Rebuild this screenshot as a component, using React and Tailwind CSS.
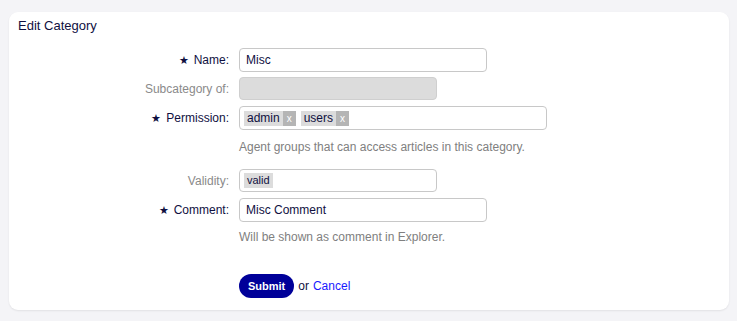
export default function App() {
  const font = { fontFamily: '"Liberation Sans", Arial, sans-serif' };
  return (
    <div className="min-h-[321px] w-[737px] bg-[#f4f4f7] pt-[12px]" style={font}>
      <div className="ml-[9px] h-[298px] w-[720px] rounded-[9px] bg-white shadow-[0_1px_2px_rgba(0,0,0,0.08)]">
        <h2 className="px-[9px] pt-[6px] text-[13px] leading-[16px] text-[#10103f]">Edit Category</h2>

        <div className="mt-[14px] flex flex-col text-[12px]">
          <Row label="Name:" required>
            <div className="flex h-[24px] w-[248px] items-center rounded-[4px] border border-[#c8c8c8] bg-white px-[6px] text-[12px] text-[#10103f]">
              Misc
            </div>
          </Row>
          <Row label="Subcategory of:" className="mt-[5px]">
            <div className="h-[23px] w-[198px] rounded-[4px] border border-[#cfcfcf] bg-[#dcdcdc]" />
          </Row>
          <Row label="Permission:" required className="mt-[6px]">
            <div className="flex h-[24px] w-[308px] items-center gap-[5px] rounded-[4px] border border-[#c8c8c8] bg-white px-[4px]">
              <Tag text="admin" />
              <Tag text="users" />
            </div>
          </Row>
          <Help className="mt-[10px]">Agent groups that can access articles in this category.</Help>
          <Row label="Validity:" className="mt-[15px]">
            <div className="flex h-[23px] w-[198px] items-center rounded-[4px] border border-[#c8c8c8] bg-white px-[4px]">
              <span className="bg-[#dcdcdc] px-[3px] text-[11px] leading-[15px] text-[#10103f]">valid</span>
            </div>
          </Row>
          <Row label="Comment:" required className="mt-[6px]">
            <div className="flex h-[24px] w-[248px] items-center rounded-[4px] border border-[#c8c8c8] bg-white px-[6px] text-[12px] text-[#10103f]">
              Misc Comment
            </div>
          </Row>
          <Help className="mt-[8px]">Will be shown as comment in Explorer.</Help>
          <div className="mt-[30px] flex items-center pl-[230px]">
            <button className="h-[24px] rounded-full bg-[#000099] px-[9px] text-[11px] font-bold text-white">
              Submit
            </button>
            <span className="ml-[4px] text-[12px] text-[#10103f]">or</span>
            <a className="ml-[4px] text-[12px] text-[#1a1aff]">Cancel</a>
          </div>
        </div>
      </div>
    </div>
  );
}

function Row({ label, required, className = "", children }) {
  return (
    <div className={`flex items-center ${className}`}>
      <div
        className={`w-[230px] pr-[10px] text-right text-[12px] ${
          required ? "text-[#10103f]" : "text-[#8a8a8a]"
        }`}
      >
        {required && <span className="mr-[5px] text-[11px]">★</span>}
        {label}
      </div>
      {children}
    </div>
  );
}

function Help({ className = "", children }) {
  return <div className={`pl-[230px] text-[12px] leading-[14px] text-[#808080] ${className}`}>{children}</div>;
}

function Tag({ text }) {
  return (
    <span className="flex h-[15px] items-stretch text-[12px] leading-[15px]">
      <span className="bg-[#dcdcdc] px-[3px] text-[#10103f]">{text}</span>
      <span className="flex w-[13px] items-center justify-center bg-[#b5b5b5] text-[10px] text-white">x</span>
    </span>
  );
}
